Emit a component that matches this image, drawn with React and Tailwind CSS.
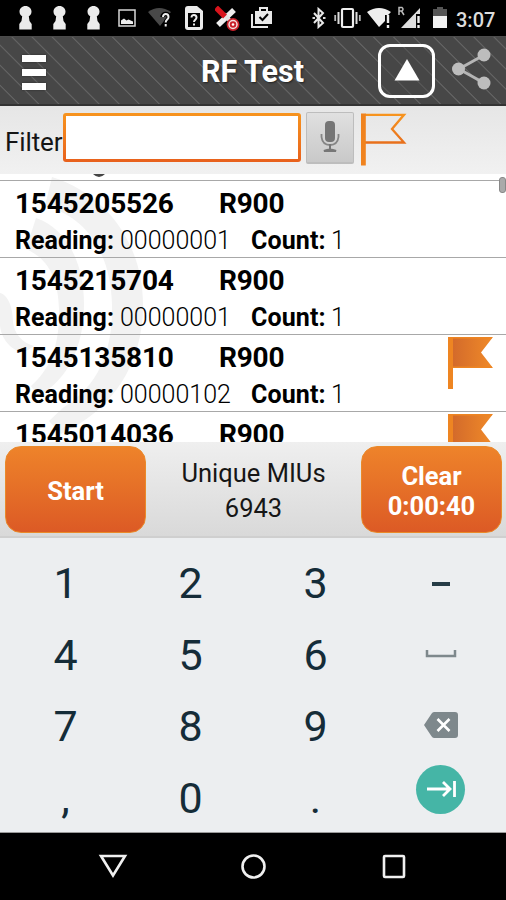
import React from "react";

const rows = [
  { id: "1545205526", reading: "00000001", flag: false },
  { id: "1545215704", reading: "00000001", flag: false },
  { id: "1545135810", reading: "00000102", flag: true },
];

function Keyhole({ className }) {
  return (
    <svg className={className} width="13" height="24" viewBox="0 0 13 24">
      <path d="M6.500 0C10 0 12.500 2.500 12.500 5.500C12.500 8 11.300 9.200 9.800 10.200L10.500 15L12.700 18V23.500H.3V18L2.500 15L3.200 10.200C1.700 9.200 .5 8 .5 5.500C.5 2.500 3 0 6.500 0Z" fill="#ebebeb" />
    </svg>
  );
}

function StatusBar() {
  return (
    <div className="flex h-9 shrink-0 items-center bg-black pl-[19px]">
      <Keyhole />
      <Keyhole className="ml-[21px]" />
      <Keyhole className="ml-[21px]" />
      <svg className="ml-[18px]" width="18" height="18" viewBox="0 0 18 18">
        <rect x="1" y="1" width="16" height="16" fill="none" stroke="#d8d8d8" strokeWidth="1.500" />
        <path d="M3 15v-3.500l3-2 2.500 2 2-1 4.500 2V15z" fill="#eee" />
      </svg>
      <svg className="ml-[12px]" width="24" height="22" viewBox="0 0 24 22">
        <path d="M0 5Q11-3 23 5L12 19z" fill="#484848" />
        <path d="M14.500 10c0-4.300 6.500-4 6.500 0 0 3-3.200 2.500-3.200 6" fill="none" stroke="#000" strokeWidth="4.500" />
        <path d="M15 10c0-4 5.500-3.700 5.500 0 0 2.700-2.800 2.500-2.800 5.500M17.700 17v2.500" fill="none" stroke="#eee" strokeWidth="2" />
      </svg>
      <svg className="ml-[13px]" width="18" height="24" viewBox="0 0 18 24">
        <path d="M3 0h9l6 5v16q0 3-3 3H3q-3 0-3-3V3q0-3 3-3z" fill="#ebebeb" />
        <rect x="3" y="7" width="12" height="14" fill="#000" />
        <path d="M6.500 11.500c0-3.500 5-3.300 5 0 0 2.300-2.500 2-2.500 4.500M9 17.500v2" fill="none" stroke="#eee" strokeWidth="2" />
      </svg>
      <svg className="ml-[12px]" width="25" height="25" viewBox="0 0 25 25">
        <path d="M3 19L19 4" stroke="#eee" strokeWidth="5.500" />
        <path d="M9 8l7 8" stroke="#e4e4e4" strokeWidth="4" />
        <path d="M1 1.500l9 9" stroke="#d8141c" strokeWidth="5.500" />
        <circle cx="18" cy="18.500" r="6.400" fill="#c9202a" />
        <circle cx="18" cy="18.500" r="4" fill="none" stroke="#f2dede" strokeWidth="1.500" />
        <circle cx="18" cy="18.500" r="1.300" fill="#fff" />
      </svg>
      <svg className="ml-[11px]" width="22" height="22" viewBox="0 0 22 22">
        <path d="M1 7v13h16" fill="none" stroke="#e8e8e8" strokeWidth="2" />
        <path d="M9 4V1h7v3" fill="none" stroke="#e8e8e8" strokeWidth="2" />
        <path d="M4 4h17v13H4z" fill="#e8e8e8" />
        <path d="M8.500 10l3 3 5.500-6" fill="none" stroke="#000" strokeWidth="2" />
      </svg>
      <svg className="ml-[39px]" width="14" height="22" viewBox="0 0 14 22">
        <path d="M2 6l9 10-4.500 4V2L11 6 2 16" fill="none" stroke="#e8e8e8" strokeWidth="2" />
        <path d="M.5 10h2.500v2H.5zM11 10h2.500v2H11z" fill="#ddd" />
      </svg>
      <svg className="ml-[8px]" width="27" height="22" viewBox="0 0 27 22">
        <rect x="8" y="2" width="11" height="18" rx="1" fill="none" stroke="#eee" strokeWidth="2.200" />
        <path d="M4.500 5v12M22.500 5v12" stroke="#ddd" strokeWidth="2" />
        <path d="M1.200 8v6M25.800 8v6" stroke="#bbb" strokeWidth="1.800" />
      </svg>
      <svg className="ml-[6px]" width="25" height="22" viewBox="0 0 25 22">
        <path d="M0 5Q12-3 24 5l-3 3h-3v6l-6 6z" fill="#eee" />
        <path d="M21 8v8M21 18v3" stroke="#eee" strokeWidth="2.400" />
      </svg>
      <svg className="ml-[6px]" width="23" height="24" viewBox="0 0 23 24">
        <path d="M1 9V1.500h3q2 1.700 0 3.500h-3M3.500 5L6 9" fill="none" stroke="#bbb" strokeWidth="1.500" />
        <path d="M3 22L22 2v6h-4v14z" fill="#ddd" />
        <path d="M20.500 10v7M20.500 19v3" stroke="#eee" strokeWidth="2.400" />
      </svg>
      <svg className="ml-[12px]" width="15" height="22" viewBox="0 0 15 22">
        <path d="M0 2h4V0h6v2h4v8H0z" fill="#555" />
        <path d="M0 9h14v12H0z" fill="#f2f2f2" />
      </svg>
      <span className="mt-[3px] ml-[8px] text-[20px] leading-none font-medium text-[#dcdcdc]">3:07</span>
    </div>
  );
}

function Header() {
  return (
    <div className="flex h-[70px] shrink-0 items-center border-y border-b-2 border-t-[#4b4b4b] border-b-[#333] bg-[#474747] bg-[repeating-linear-gradient(45deg,transparent_0px,transparent_12.300px,#626262_13px,#626262_13.500px,transparent_14.200px)] pl-[22px]">
      <div className="mt-[3px] flex w-6 flex-col gap-[7px]">
        <div className="h-[7px] bg-white shadow-[0_0_2px_#222]" />
        <div className="h-[7px] bg-white shadow-[0_0_2px_#222]" />
        <div className="h-[7px] bg-white shadow-[0_0_2px_#222]" />
      </div>
      <h1 className="mt-[4px] ml-[155px] w-[177px] text-[30.500px] leading-none font-bold whitespace-nowrap text-white [text-shadow:1px_1px_2px_#222]">
        RF Test
      </h1>
      <div className="flex h-[54px] w-[57px] items-center justify-center rounded-[12px] border-[3px] border-white bg-[#474747]/40">
        <svg className="-mt-px" width="26" height="22" viewBox="0 0 26 22"><path d="M13 0l12.500 21.500H.5z" fill="#fff" /></svg>
      </div>
      <svg className="-mt-[3px] ml-[16px]" width="42" height="44" viewBox="0 0 42 44">
        <path d="M33 8L8 22l25 14" fill="none" stroke="#b5b5b5" strokeWidth="3" />
        <circle cx="33" cy="8" r="6.500" fill="#bdbdbd" />
        <circle cx="7.500" cy="22" r="6.500" fill="#bdbdbd" />
        <circle cx="33" cy="36" r="6.500" fill="#bdbdbd" />
      </svg>
    </div>
  );
}

function FilterBar() {
  return (
    <div className="flex h-[68px] shrink-0 items-start bg-linear-to-b from-[#e6e6e6] to-[#f1f1f1] pl-[5px]">
      <label className="mt-[20px] w-[58px] text-[26px] leading-8 tracking-[-0.100px] text-[#151515]">Filter</label>
      <div className="mt-[7px] h-[49px] w-[238px] rounded-[3px] bg-linear-to-b from-[#f7941e] to-[#e8601c] p-[3px]">
        <div className="h-full w-full bg-white" />
      </div>
      <div className="mt-[6px] ml-[5px] flex h-[52px] w-[48px] items-center justify-center rounded-[2px] border border-b-2 border-[#bdbdbd] bg-linear-to-b from-[#e0e0e0] to-[#c9c9c9]">
        <svg className="-mt-px" width="20" height="32" viewBox="0 0 20 32">
          <rect x="5" y="0" width="10" height="21" rx="4" fill="#757575" />
          <path d="M1.500 13v3q1 8 8.500 8t8.500-8v-3" fill="none" stroke="#858585" strokeWidth="1.800" />
          <path d="M10 23v6M4 30q6-3 12 0z" fill="#777" stroke="#777" strokeWidth="2" />
        </svg>
      </div>
      <svg className="mt-[7px] ml-[6px]" width="47" height="53" viewBox="0 0 47 53">
        <defs>
          <linearGradient id="outlineFlag" x1="0" y1="0" x2="0" y2="1">
            <stop offset="0" stopColor="#f7941e" />
            <stop offset="1" stopColor="#e8701c" />
          </linearGradient>
        </defs>
        <path d="M5 1.800h39L32 16l12 13.500H5" fill="none" stroke="url(#outlineFlag)" strokeWidth="2.300" />
        <rect x="1" y="0.500" width="4.800" height="52" fill="#f0831e" />
      </svg>
    </div>
  );
}

function Watermark() {
  return (
    <svg className="absolute top-0 left-0" width="160" height="268" viewBox="0 174 160 268">
      <g fill="#f2f2f2">
        <path d="M52 177C108 195 143 245 143 305C143 365 112 410 61 434L49 421L64 407C99 385 113 350 112 305C111 255 88 217 45 206Z" />
        <path d="M36 218C66 228 84 262 84 304C84 346 68 380 38 396L31 386C50 370 60 345 59 309C58 277 48 259 26 249Z" />
        <path d="M0 293C9 295 13 310 13 322C14 333 22 343 34 346L23 353C8 349 0 335 0 324Z" />
      </g>
    </svg>
  );
}

function SolidFlag() {
  return (
    <svg className="mt-[2px] mr-[12px] ml-auto shrink-0" width="47" height="53" viewBox="0 0 47 53">
      <defs>
        <linearGradient id="solidFlag">
          <stop offset="0" stopColor="#d2692b" />
          <stop offset="1" stopColor="#f08a28" />
        </linearGradient>
      </defs>
      <path d="M4 0h42L34 15.500 46 31H4z" fill="url(#solidFlag)" />
      <path d="M4 .7h41M4 30.300h41" stroke="#ee8522" strokeWidth="1.400" />
      <rect x="1" y="0" width="5" height="52" fill="#ee8522" />
    </svg>
  );
}

function RowTitle({ id }) {
  return (
    <div className="flex text-[28px] leading-8 font-bold tracking-[-0.200px]">
      <span className="w-[204px]">{id}</span>
      <span>R900</span>
    </div>
  );
}

function Row({ id, reading, flag }) {
  return (
    <div className="flex h-[77px] shrink-0 items-start border-t-[1.500px] border-[#a8a8a8] pl-[15px]">
      <div className="pt-[7px]">
        <RowTitle id={id} />
        <div className="mt-[5px] flex text-[25px] leading-8">
          <span className="w-[105px] font-bold">Reading:</span>
          <span className="w-[131px] font-light">{reading}</span>
          <span className="w-[80px] font-bold tracking-[0.100px]">Count:</span>
          <span className="font-light">1</span>
        </div>
      </div>
      {flag && <SolidFlag />}
    </div>
  );
}

function ReadingList() {
  return (
    <div className="relative h-[268px] shrink-0 overflow-hidden bg-white text-black">
      <Watermark />
      <div className="relative flex flex-col">
        <div className="h-[6px] pl-[93px]">
          <svg width="12" height="4" viewBox="0 0 12 4"><path d="M0 0h12Q6 6 0 0z" fill="#444" /></svg>
        </div>
        {rows.map((r) => <Row key={r.id} {...r} />)}
        <div className="flex h-[31px] items-start overflow-hidden border-t-[1.500px] border-[#a8a8a8] pl-[15px]">
          <div className="pt-[7px]"><RowTitle id="1545014036" /></div>
          <SolidFlag />
        </div>
      </div>
      <div className="absolute top-[3px] right-0 h-[16px] w-[7px] rounded-[3px] border border-[#888] bg-[#aaa]" />
    </div>
  );
}

function ActionBar() {
  const button =
    "flex h-[87px] w-[141px] flex-col items-center justify-center rounded-[16px] border-[1.500px] border-[#ea8a2a] bg-linear-to-b from-[#ee832a] to-[#dc5a25] pt-[3px] text-[25.500px] leading-[30px] font-bold text-white";
  return (
    <div className="flex h-[96px] shrink-0 items-start justify-between border-b-2 border-[#cfcfcf] bg-linear-to-b from-[#efefef] to-[#d9d9d9] pt-[4px] pr-[4px] pl-[5px]">
      <button className={button}>Start</button>
      <div className="mt-[10px] text-center text-[25.500px] leading-[35px] text-[#161616]">
        <div>Unique MIUs</div>
        <div>6943</div>
      </div>
      <button className={button}>
        <span>Clear</span>
        <span>0:00:40</span>
      </button>
    </div>
  );
}

function Key({ children }) {
  return <div className="flex h-[71.500px] items-center justify-center">{children}</div>;
}

function Keypad() {
  return (
    <div className="grid h-[295px] shrink-0 grid-cols-[125px_125px_125px_125px] content-start border-b border-[#9a9a9a] bg-[#eceef0] pt-[10px] pl-[3px] text-[43px] leading-none text-[#152c38]">
      <Key>1</Key><Key>2</Key><Key>3</Key>
      <Key><div className="h-[4px] w-[18px] bg-[#263c46]" /></Key>
      <Key>4</Key><Key>5</Key><Key>6</Key>
      <Key>
        <svg className="-mt-[3px]" width="32" height="8" viewBox="0 0 32 8"><path d="M2 0v6h28V0" fill="none" stroke="#7e888c" strokeWidth="2.500" /></svg>
      </Key>
      <Key>7</Key><Key>8</Key><Key>9</Key>
      <Key>
        <svg className="-mt-[3px]" width="34" height="26" viewBox="0 0 34 26">
          <path d="M10 0h21q3 0 3 3v20q0 3-3 3H10q-1.500 0-2.500-1.700L0 13 7.500 1.700Q8.500 0 10 0z" fill="#7e888c" />
          <path d="M13.500 7l12 12M25.500 7L13.500 19" stroke="#fff" strokeWidth="2.600" />
        </svg>
      </Key>
      <Key>,</Key><Key>0</Key><Key>.</Key>
      <Key>
        <div className="-mt-[18px] flex size-[49px] items-center justify-center rounded-full bg-[#45b5a6]">
          <svg width="32" height="20" viewBox="0 0 32 20"><path d="M2 10h23M18 3l7 7-7 7M29.500 2v16" fill="none" stroke="#fff" strokeWidth="2.800" /></svg>
        </div>
      </Key>
    </div>
  );
}

function NavBar() {
  return (
    <div className="flex h-[67px] shrink-0 items-center bg-black pl-[98px]">
      <svg className="-mt-px" width="30" height="24" viewBox="0 0 30 24"><path d="M3 2h24L15 21.500z" fill="none" stroke="#f0f0f0" strokeWidth="2.600" /></svg>
      <svg className="ml-[112px]" width="27" height="27" viewBox="0 0 27 27"><circle cx="13.500" cy="13.500" r="11" fill="none" stroke="#f0f0f0" strokeWidth="2.600" /></svg>
      <svg className="ml-[115px]" width="24" height="25" viewBox="0 0 24 25"><rect x="2" y="2" width="20" height="21" rx="1" fill="none" stroke="#f0f0f0" strokeWidth="2.600" /></svg>
    </div>
  );
}

export default function App() {
  return (
    <div className="flex h-[900px] w-[506px] flex-col overflow-hidden bg-white font-['Roboto',sans-serif]">
      <StatusBar />
      <Header />
      <FilterBar />
      <ReadingList />
      <ActionBar />
      <Keypad />
      <NavBar />
    </div>
  );
}
